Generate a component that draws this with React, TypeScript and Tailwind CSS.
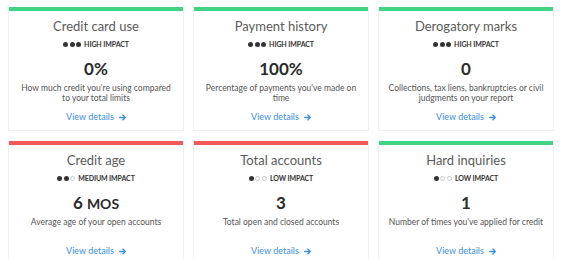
import React from 'react'

type Factor = {
  title: string
  impact: 'HIGH' | 'MEDIUM' | 'LOW'
  value: React.ReactNode
  desc: string
  good: boolean
}

const factors: Factor[] = [
  { title: 'Credit card use', impact: 'HIGH', value: '0%', desc: "How much credit you're using compared to your total limits", good: true },
  { title: 'Payment history', impact: 'HIGH', value: '100%', desc: "Percentage of payments you've made on time", good: true },
  { title: 'Derogatory marks', impact: 'HIGH', value: '0', desc: 'Collections, tax liens, bankruptcies or civil judgments on your report', good: true },
  {
    title: 'Credit age',
    impact: 'MEDIUM',
    value: (
      <>
        6 <span className="text-[14px]">MOS</span>
      </>
    ),
    desc: 'Average age of your open accounts',
    good: false,
  },
  { title: 'Total accounts', impact: 'LOW', value: '3', desc: 'Total open and closed accounts', good: false },
  { title: 'Hard inquiries', impact: 'LOW', value: '1', desc: "Number of times you've applied for credit", good: true },
]

function Dots({ filled }: { filled: number }) {
  return (
    <span className="flex items-center gap-[1.5px] mr-[3px]">
      {[0, 1, 2].map((i) =>
        i < filled ? (
          <span key={i} className="w-[5px] h-[5px] rounded-full bg-[#333]" />
        ) : (
          <span key={i} className="w-[5px] h-[5px] rounded-full border border-[#c8c8c8]" />
        )
      )}
    </span>
  )
}

function FactorCard({ f }: { f: Factor }) {
  const filled = f.impact === 'HIGH' ? 3 : f.impact === 'MEDIUM' ? 2 : 1
  return (
    <div className="flex flex-col border-x border-b border-[#f0f0f0] pb-[8px]">
      <div className={f.good ? 'h-[4px] bg-[#3fd382]' : 'h-[4px] bg-[#f25a5a]'} />
      <div className="mt-[7px] h-[16px] leading-[16px] text-[13px] text-[#5a5a5a] text-center">{f.title}</div>
      <div className="mt-[5px] h-[10px] flex items-center justify-center text-[7px] font-bold text-[#333] tracking-[-0.1px]">
        <Dots filled={filled} />
        {f.impact} IMPACT
      </div>
      <div className="mt-[10px] h-[20px] leading-[20px] text-[17px] font-bold text-[#2b2b2b] text-center">{f.value}</div>
      <div className="mt-[5px] h-[19px] px-[8px] text-[8.5px] leading-[9.5px] text-[#555] text-center">{f.desc}</div>
      <div className="mt-[9px] h-[10px] flex items-center justify-center gap-[5px] text-[9px] leading-[10px] text-[#3b8fe0]">
        View details
        <svg width="7" height="7" viewBox="0 0 10 10" fill="none" stroke="#3b8fe0" strokeWidth="1.8" strokeLinecap="round" strokeLinejoin="round">
          <path d="M1 5h8M5.5 1.5 9 5 5.5 8.5" />
        </svg>
      </div>
    </div>
  )
}

export default function App() {
  return (
    <div className="w-[561px] h-[260px] overflow-hidden bg-white pt-[7px] pl-[8px] pr-[7px]" style={{ fontFamily: 'Lato, "Noto Sans", sans-serif' }}>
      <div className="grid grid-cols-3 gap-x-[9px] gap-y-[10px]">
        {factors.map((f) => (
          <FactorCard key={f.title} f={f} />
        ))}
      </div>
    </div>
  )
}
